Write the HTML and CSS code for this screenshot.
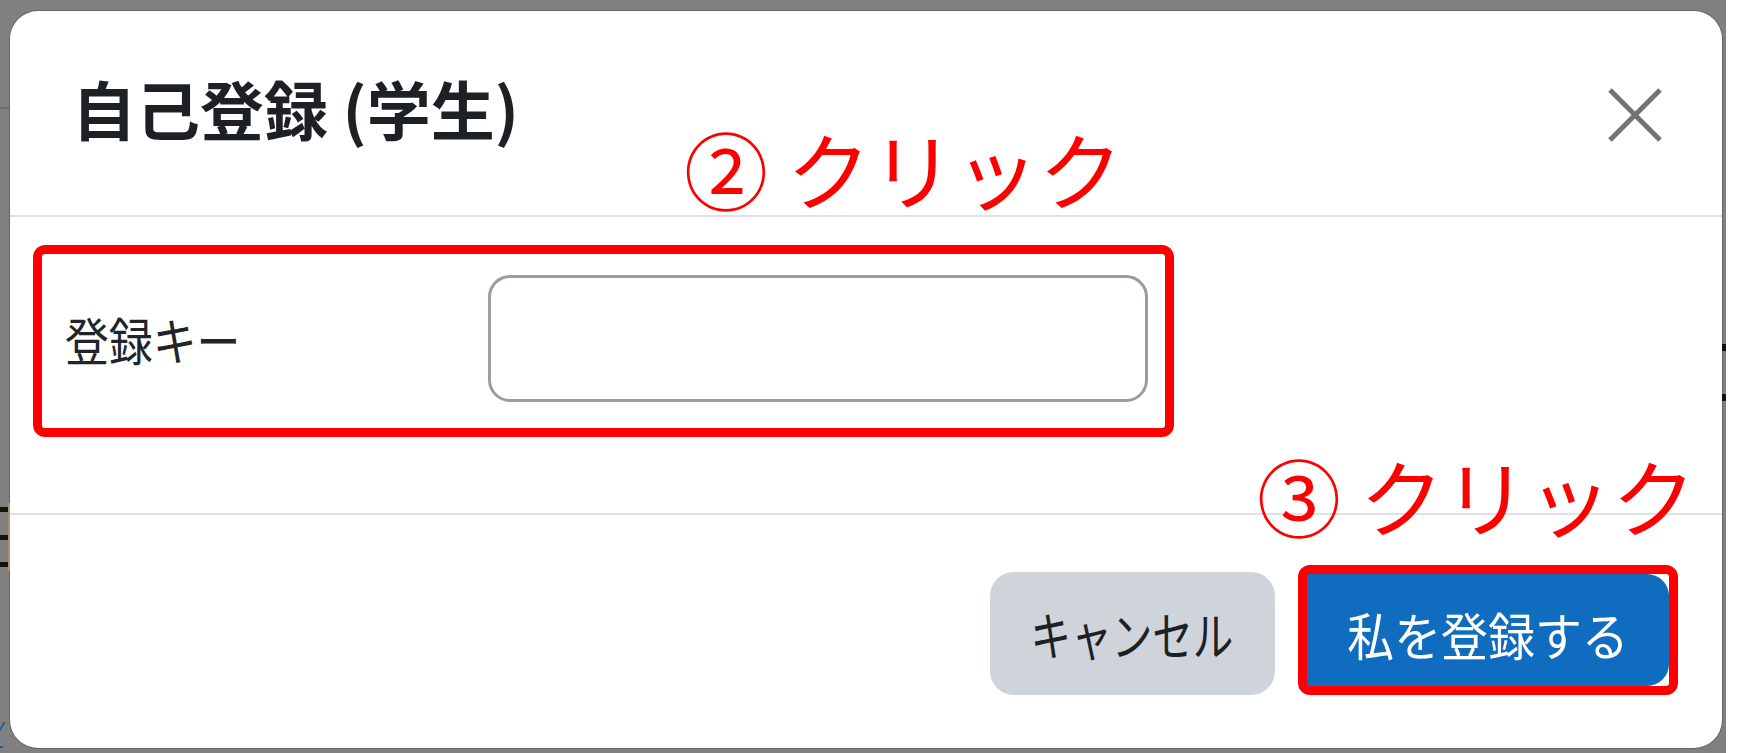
FILE: index.html
```html
<!DOCTYPE html>
<html lang="ja">
<head>
    <meta charset="UTF-8">
    <meta name="viewport" content="width=device-width, initial-scale=1.0">
    <title>自己登録 (学生)</title>
    <link rel="stylesheet" href="styles.css">
</head>
<body>
    <div class="backdrop">
        <!-- bits of the page behind the dialog -->
        <span class="peek peek-rule"></span>
        <span class="peek peek-dash d1"></span>
        <span class="peek peek-dash d2"></span>
        <span class="peek peek-dash d3"></span>
        <span class="peek peek-edge"></span>
        <span class="peek peek-link"></span>
        <span class="peek peek-right r1"></span>
        <span class="peek peek-right r2"></span>

        <div class="modal">
            <header class="modal-header">
                <h5 class="modal-title">自己登録 (学生)</h5>
                <button class="close-btn" aria-label="閉じる">
                    <svg width="54" height="54" viewBox="0 0 54 54">
                        <path d="M2 2 L52 52 M52 2 L2 52" stroke="#737373" stroke-width="5" fill="none"/>
                    </svg>
                </button>
            </header>

            <section class="modal-body">
                <div class="mark-box">
                    <label class="field-label" for="enrolkey"><span>登録キー</span></label>
                    <input class="field-input" id="enrolkey" type="text">
                </div>
            </section>

            <footer class="modal-footer">
                <button class="btn btn-secondary"><span>キャンセル</span></button>
                <div class="mark-btn">
                    <button class="btn btn-primary"><span>私を登録する</span></button>
                </div>
            </footer>
        </div>

        <div class="note note-2"><span class="num">②</span> クリック</div>
        <div class="note note-3"><span class="num">③</span> クリック</div>
    </div>
</body>
</html>
```

FILE: styles.css
```css
/* Page */
body {
    margin: 0;
    background-color: #fff;
    font-family: "Noto Sans CJK JP", "Noto Sans", sans-serif;
    color: #1d2125;
    overflow: hidden;
}

.backdrop {
    position: relative;
    box-sizing: border-box;
    width: 1726px;
    height: 753px;
    padding: 11px 4px 5px 10px;
    background-color: #808080;
}

.peek {
    position: absolute;
    display: block;
}

.peek-rule {
    left: 0;
    top: 107px;
    width: 10px;
    height: 2px;
    background-color: #6e6e6e;
}

.peek-dash {
    left: 0;
    width: 9px;
    height: 5px;
    background-color: #111;
}

.d1 { top: 507px; }
.d2 { top: 535px; }
.d3 { top: 562px; }

.peek-edge {
    left: 8px;
    top: 503px;
    width: 2px;
    height: 68px;
    background-color: #a8926a;
}

.peek-link {
    left: -4px;
    top: 722px;
    width: 12px;
    height: 24px;
    border-left: 2px solid #1c5a96;
    border-bottom: 2px solid #1c5a96;
    transform: skewX(-30deg);
}

.peek-right {
    left: 1722px;
    width: 4px;
    height: 7px;
    background-color: #111;
}

.r1 { top: 344px; }
.r2 { top: 394px; }

/* Dialog */
.modal {
    display: flex;
    flex-direction: column;
    height: 100%;
    background-color: #fff;
    border-radius: 28px;
    box-shadow: 0 0 0 1px #666;
    overflow: hidden;
}

.modal-header {
    box-sizing: border-box;
    height: 206px;
    display: flex;
    align-items: center;
    justify-content: space-between;
    padding: 0 60px 0 62px;
    border-bottom: 2px solid #dee2e6;
}

.modal-title {
    margin: 0 0 12px;
    font-size: 64px;
    font-weight: 700;
    line-height: 1;
    color: #1d2125;
}

.close-btn {
    padding: 0;
    border: none;
    background: none;
    display: flex;
    margin-top: 4px;
}

.modal-body {
    box-sizing: border-box;
    height: 296px;
    padding: 28px 0 0 23px;
}

.mark-box {
    box-sizing: border-box;
    width: 1141px;
    height: 192px;
    border: 9px solid #ff0000;
    border-radius: 12px;
    display: flex;
    align-items: center;
}

.field-label {
    flex: 0 0 423px;
    padding-left: 23px;
    margin-bottom: 4px;
    font-size: 51px;
    line-height: 1;
    color: #212529;
}

.field-label span {
    display: inline-block;
    transform: scaleX(0.86);
    transform-origin: left center;
}

.field-input {
    box-sizing: border-box;
    width: 660px;
    height: 127px;
    margin-bottom: 5px;
    border: 3px solid #979da5;
    border-radius: 22px;
    background-color: #fff;
}

.modal-footer {
    flex: 1;
    display: flex;
    justify-content: flex-end;
    align-items: flex-end;
    gap: 23px;
    padding: 0 44px 53px 0;
    border-top: 2px solid #dee2e6;
}

.btn {
    border: none;
    font-family: inherit;
    line-height: 1;
    cursor: pointer;
}

.btn-secondary {
    width: 285px;
    height: 123px;
    border-radius: 24px;
    background-color: #ced4da;
    color: #1d2125;
    font-size: 52px;
}

.btn-secondary span {
    display: inline-block;
    transform: scaleX(0.78);
}

.mark-btn {
    box-sizing: border-box;
    width: 380px;
    height: 130px;
    border: 9px solid #ff0000;
    border-radius: 12px;
    display: flex;
}

.btn-primary {
    flex: 1;
    padding: 8px 0 0;
    border-radius: 0 22px 22px 0;
    background-color: #0f6cbf;
    color: #fff;
    font-size: 51px;
}

.btn-primary span {
    display: inline-block;
    transform: scaleX(0.92);
}

/* Red annotations */
.note {
    position: absolute;
    font-size: 84px;
    font-weight: 400;
    line-height: 1;
    color: #ff0000;
    white-space: nowrap;
}

.note-2 {
    left: 684px;
    top: 126px;
}

.note-3 {
    left: 1257px;
    top: 453px;
}
```
